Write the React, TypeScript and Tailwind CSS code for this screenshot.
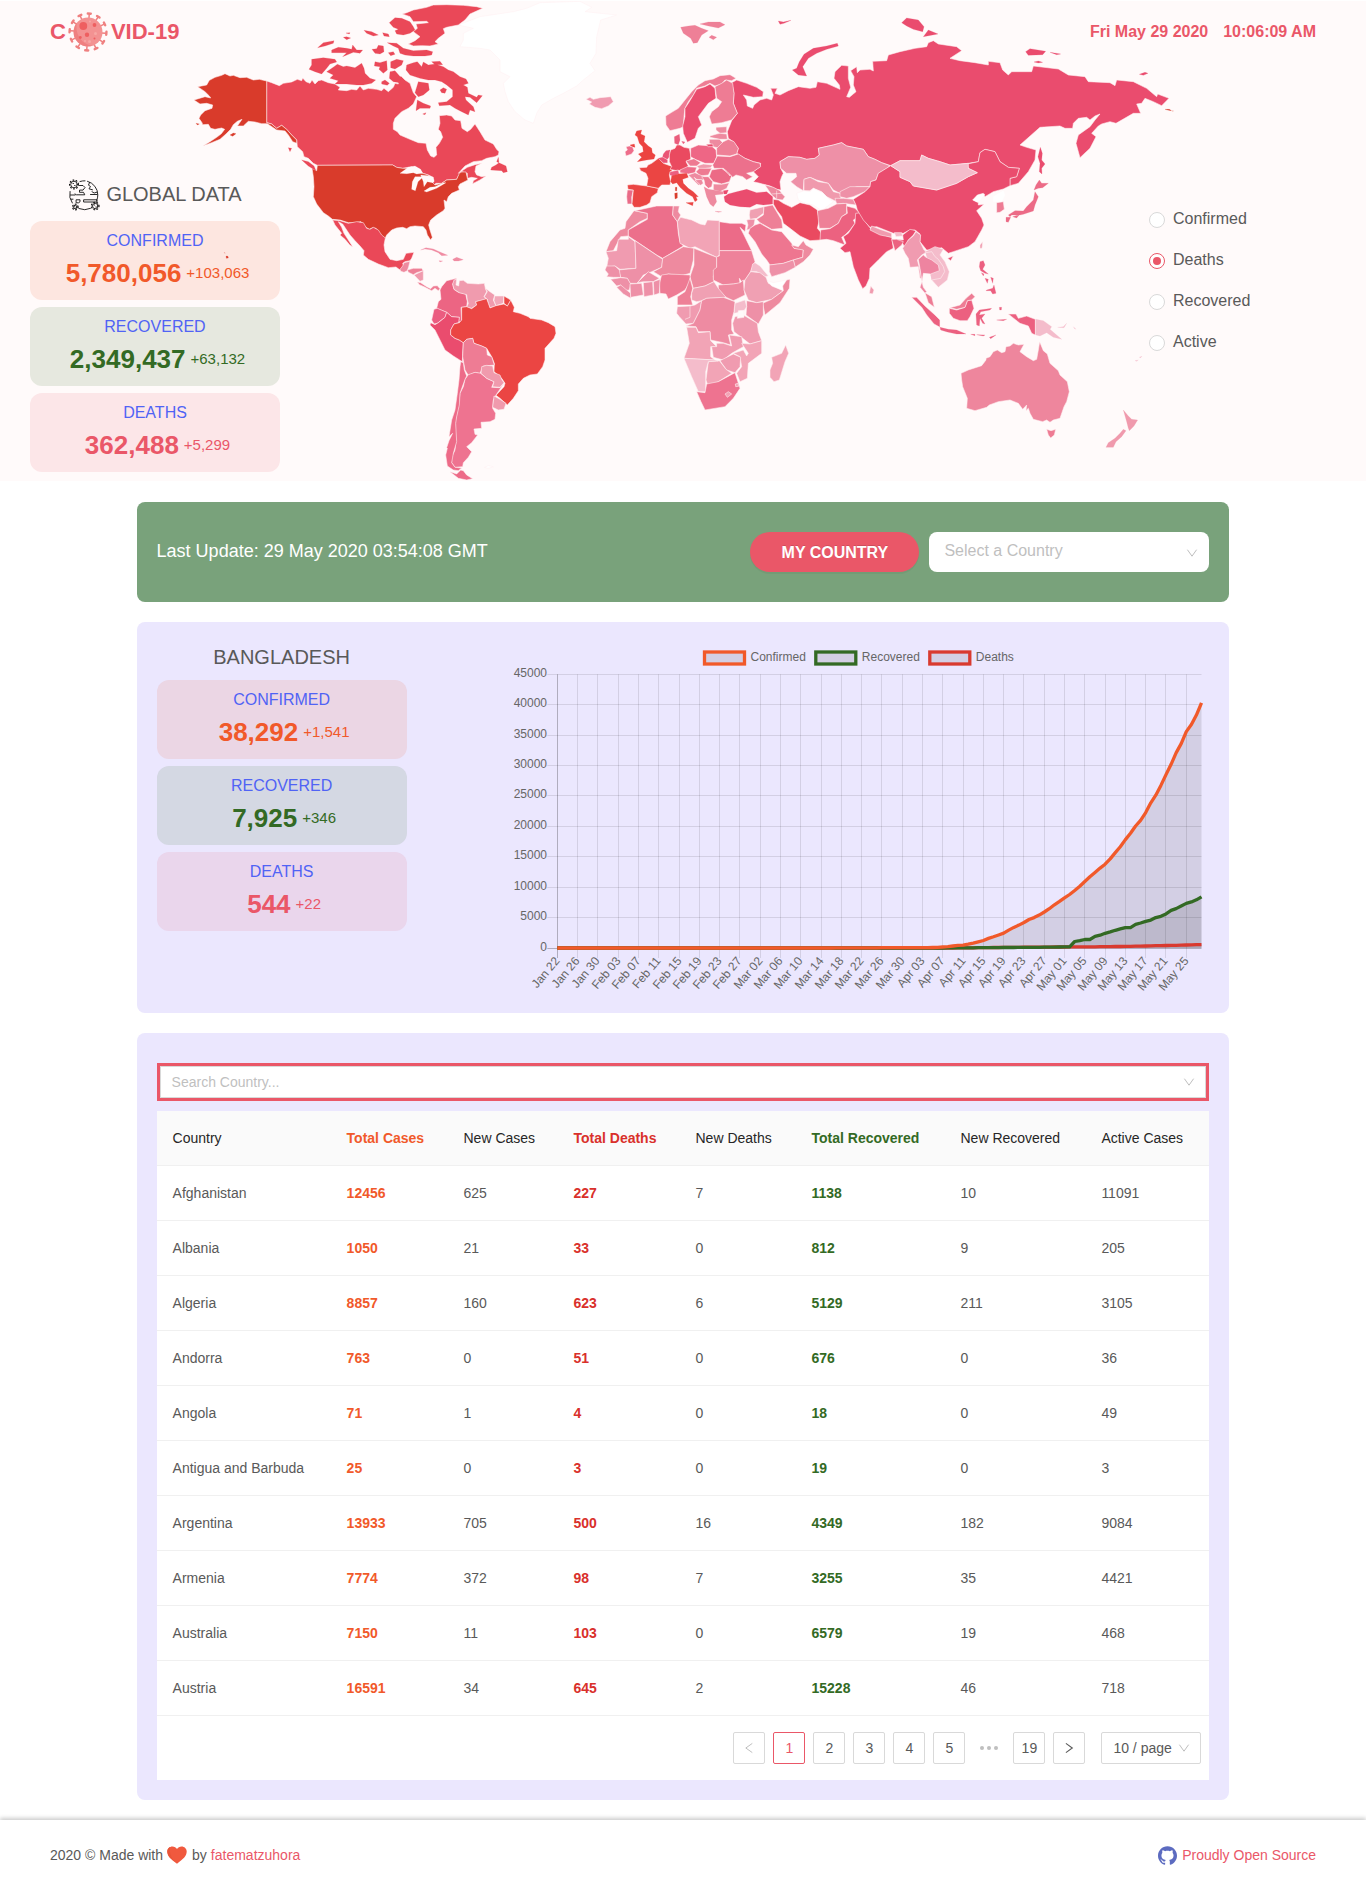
import React from "react";
import { SiGithub } from "react-icons/si";

type Shape = [fill: string, d: string];

const RUS = "#ea4c6e";
const USA = "#d93b2b";
const CAN = "#ea4858";
const HOT = "#eb4543";
const BG = "#fffafa";

const northAmerica: Shape[] = [
  ["#ffffff", "M850 100 880 85 835 75 900 50 1000 35 1040 25 1080 8 1200 4 1235 22 1215 35 1310 45 1262 60 1250 110 1248 160 1230 190 1245 212 1210 240 1190 258 1150 280 1120 295 1085 315 1070 340 1060 370 1035 360 1005 335 985 305 975 275 970 250 990 230 960 215 960 180 930 150 900 145 840 140 850 120Z"],
  [CAN, "M260 243 275 248 298 257 310 250 335 246 352 238 365 242 368 234 378 245 390 250 396 240 405 252 415 242 425 240 445 248 465 252 480 262 475 270 500 272 515 268 530 270 540 258 550 270 565 265 590 268 605 272 612 265 625 275 640 262 645 250 655 252 652 235 663 228 675 240 690 250 700 278 710 290 700 312 685 325 665 335 645 355 640 370 640 388 652 395 660 405 690 418 715 428 738 430 742 450 752 468 762 472 770 465 768 442 778 430 788 412 782 395 775 388 780 370 778 347 800 345 815 348 825 360 842 362 846 385 862 395 872 388 885 372 900 395 910 412 915 420 940 432 950 448 957 455 955 465 945 470 920 475 905 482 880 485 855 498 835 520 862 502 885 494 905 490 888 498 885 515 890 525 905 530 918 528 900 540 878 551 880 542 892 535 875 532 862 535 862 520 845 515 835 528 830 538 800 540 785 550 768 550 755 562 735 572 740 560 750 553 762 545 760 532 745 525 728 520 718 508 695 500 668 505 650 502 638 495 412 496 400 490 385 475 372 470 368 455 352 440 350 420 335 405 320 388 305 376 290 385 275 372 260 368Z"],
  [USA, "M260 243 238 238 220 240 200 232 180 233 160 226 150 228 135 221 125 226 105 232 88 241 80 255 53 260 75 275 88 288 92 294 75 290 42 300 60 312 80 310 98 315 96 325 75 332 62 345 57 355 66 368 68 374 85 373 92 385 105 388 125 384 134 388 124 401 110 412 90 425 70 437 95 428 120 418 138 402 152 388 160 374 172 364 186 358 172 378 190 378 205 364 225 366 245 371 262 371 290 390 315 393 325 405 338 425 350 430 350 420 335 405 320 388 305 376 290 385 275 372 260 368Z"],
  [USA, "M150 405 160 399 168 401 158 409ZM48 370 58 372 52 375Z"],
  [USA, "M412 496 638 495 650 502 668 505 695 505 728 520 745 525 755 545 765 555 785 550 800 540 830 538 838 520 845 516 858 516 862 535 864 540 840 552 835 560 838 570 815 580 805 590 800 605 792 600 795 625 790 632 770 645 752 660 746 675 750 690 757 712 752 720 742 705 738 690 730 680 705 678 690 680 680 686 668 682 650 684 635 690 620 705 615 716 605 710 595 695 588 685 578 683 568 688 555 680 543 665 525 668 505 668 480 660 457 658 445 648 430 638 410 612 400 590 402 560 400 530 396 505 410 512Z"],
  [BG, "M660 520 685 502 705 498 722 508 728 520 710 522 700 518 680 521ZM705 530 730 530 714 545 706 572 695 568 697 545ZM722 525 745 527 762 540 758 548 742 545 732 560 730 545ZM732 573 750 562 765 560 790 548 798 548 770 565 740 576Z"],
  [CAN, "M680 38 700 30 740 22 760 15 800 14 850 16 890 20 908 25 870 42 855 60 835 75 800 82 790 86 795 100 775 115 765 125 775 132 750 138 725 137 700 138 685 132 705 122 720 110 700 95 712 85 708 72 745 68 740 64 700 65 690 50 667 42Z"],
  [CAN, "M628 68 645 53 665 55 690 65 700 80 705 90 690 100 670 105 650 102 645 92 655 88 640 82ZM622 128 650 130 670 145 700 152 740 150 758 155 755 165 735 168 700 168 675 165 660 160 655 145 640 138Z"],
  [CAN, "M395 178 430 173 465 178 470 186 450 192 440 205 425 222 405 215 387 208 395 195ZM440 215 462 200 472 193 490 200 500 198 525 203 545 190 552 205 555 220 570 235 587 240 575 250 550 255 530 255 500 252 465 252 475 242 450 235 460 225Z"],
  [CAN, "M455 150 475 142 500 145 515 148 518 135 530 150 548 150 540 160 520 157 488 170 500 158 455 158ZM413 143 430 128 462 122 460 130 435 138ZM490 112 500 110 512 114 500 119ZM498 99 510 98 508 102ZM552 91 575 95 595 105 580 108 560 100ZM608 98 625 102 628 110 612 108ZM576 148 590 146 595 136 610 138 612 155 600 162 585 160ZM625 158 640 155 645 163 632 167ZM585 185 600 188 620 182 622 210 610 220 597 208 600 200 583 198ZM632 185 650 178 670 182 665 195 645 207 632 203ZM630 215 645 212 662 232 660 248 640 245 628 235ZM605 245 615 240 628 250 622 256 605 252Z"],
  [CAN, "M680 195 700 188 712 185 725 200 730 186 745 195 765 192 790 200 805 210 820 215 840 230 858 237 865 250 850 255 862 262 865 280 890 292 895 285 907 287 890 308 870 292 855 290 858 300 880 320 885 335 870 330 865 345 845 335 825 325 810 315 778 317 775 308 800 305 818 290 818 270 800 255 785 245 765 240 745 240 720 235 690 225 678 210ZM755 185 780 184 788 194 765 194ZM712 300 730 310 752 318 750 325 735 325 720 325 708 332ZM715 245 745 250 748 270 730 285 715 290 705 278ZM780 270 790 263 800 268 795 280 785 278ZM728 342 738 338 735 344Z"],
  [CAN, "M365 480 385 485 402 498 408 512 385 498ZM325 443 335 445 330 455ZM935 502 948 495 957 488 955 472 950 485 965 492 978 498 982 515 970 518 965 512 932 510Z"],
  [USA, "M138 768 144 769 145 774 139 775ZM133 758 135 758 135 760Z"],
];

const southAmerica: Shape[] = [
  [CAN, "M98 0 120 2 145 10 170 5 190 8 200 25 210 28 220 22 235 30 245 45 256 54 252 75 255 95 270 118 290 122 310 118 318 100 342 97 335 115 330 122 315 125 308 130 312 138 300 150 288 141 265 143 235 132 205 118 190 105 192 92 180 78 165 62 150 45 140 30 128 12 115 5 125 22 132 40 145 60 158 80 150 76 135 58 120 45 125 40 105 15Z"],
  ["#ee8a9f", "M300 148 308 138 312 128 330 124 326 140 322 152 312 157 302 154Z"],
  ["#ee8097", "M322 150 340 145 365 145 370 152 350 158 340 164 325 157Z"],
  ["#f09bae", "M342 165 370 152 370 180 360 184Z"],
  ["#ee7c94", "M352 186 362 188 380 200 392 206 400 198 412 197 420 206 415 212 405 205 395 212 385 207 372 200 358 194Z"],
  ["#f08ca2", "M362 90 378 83 400 87 420 96 443 106 425 107 415 98 395 90 375 87ZM458 118 470 112 490 119 475 123 462 123ZM417 122 428 123 420 126Z"],
  ["#ec6583", "M458 178 470 175 458 192 462 208 475 217 497 222 502 245 500 260 483 262 485 305 475 305 478 292 455 290 440 277 410 265 415 245 423 238 420 210 425 200 440 182Z"],
  ["#f09bae", "M458 192 462 180 470 178 468 195 476 198 478 182 490 181 502 190 535 192 553 190 556 205 560 215 552 230 560 238 527 245 530 255 515 265 500 262 505 250 502 240 500 224 478 218 462 208Z"],
  ["#f09bae", "M556 205 570 215 584 225 580 240 588 258 570 263 565 250 562 238 553 230 562 215Z"],
  ["#f2a8b9", "M584 228 612 228 610 250 588 257 582 242Z"],
  ["#eb5c80", "M402 268 412 265 440 277 435 292 412 310 402 312 395 300Z"],
  [RUS, "M440 277 455 290 478 292 476 308 462 312 452 330 452 345 465 355 478 360 490 368 488 400 487 425 460 408 435 390 420 360 405 330 390 315 392 308 405 314 415 308 435 292Z"],
  [HOT, "M485 262 500 260 515 266 530 255 527 245 560 236 565 250 570 264 588 257 612 252 622 258 632 240 643 262 640 275 660 280 685 290 690 295 725 300 745 308 765 320 768 340 762 355 735 385 735 420 728 440 712 462 690 465 670 475 655 492 655 512 640 535 622 555 600 535 588 526 612 500 615 490 605 475 582 455 583 430 575 410 560 385 545 378 522 370 518 355 500 358 490 368 478 360 465 355 452 345 452 330 462 312 478 308 485 300Z"],
  [HOT, "M612 228 632 240 622 258 612 250Z"],
  ["#ee7c94", "M490 368 500 358 518 355 522 370 545 378 560 385 562 405 575 410 583 435 575 436 550 438 540 460 525 457 505 466 495 450 488 410Z"],
  ["#ee7390", "M505 464 525 457 542 460 560 475 582 485 575 502 600 503 612 490 588 525 580 540 578 565 587 580 585 598 570 605 543 607 545 625 522 627 525 643 533 645 515 668 500 680 515 695 505 712 490 728 488 740 465 742 455 728 455 712 465 690 468 660 465 610 475 560 480 520 490 500 495 478Z"],
  ["#f09aad", "M545 440 560 436 578 438 582 458 600 465 605 478 612 488 600 502 578 500 582 485 560 475 543 460Z"],
  ["#f09aad", "M582 528 600 538 618 550 612 568 595 570 578 562Z"],
  ["#ed6b88", "M482 425 490 428 493 450 500 468 495 478 480 520 478 555 470 590 467 610 470 665 460 700 455 728 465 742 485 744 475 752 460 750 442 738 437 705 442 685 440 683 447 662 458 640 447 650 455 600 465 570 472 520 477 480 480 440Z"],
  ["#ed6b88", "M450 755 470 762 482 750 490 752 500 765 518 776 500 780 475 775Z"],
  ["#ffffff", "M553 742 565 737 580 740 565 745Z"],
];

const eurasia: Shape[] = [
  ["#f09bb0", "M18 298 30 292 40 298 60 293 92 290 100 305 85 318 65 326 45 322 28 312 35 306Z"],
  ["#ee8097", "M302 82 325 78 345 76 365 85 385 92 365 105 352 128 340 130 332 115 310 100ZM360 72 385 66 420 66 435 74 415 84 385 78ZM387 112 395 106 410 112 400 119Z"],
  [RUS, "M595 63 610 66 633 61 612 70 600 73ZM637 210 650 205 658 185 672 163 700 145 740 138 772 130 775 138 740 148 710 160 685 175 668 200 680 228 655 225Z"],
  [RUS, "M455 248 470 240 500 250 530 262 550 275 548 290 520 292 490 285 500 300 502 318 518 325 522 315 540 300 560 295 575 300 580 285 572 265 592 265 585 280 600 285 625 272 655 260 690 265 708 262 712 245 740 250 780 268 778 255 762 235 765 215 785 196 805 198 805 235 812 262 800 290 808 292 828 275 820 255 822 230 812 212 830 200 832 218 840 210 870 208 880 213 878 184 920 182 925 165 960 155 1005 145 1040 140 1045 128 1060 122 1075 132 1130 140 1145 152 1110 175 1140 182 1185 188 1225 195 1225 184 1260 188 1268 210 1285 225 1295 215 1355 215 1360 198 1435 207 1465 225 1515 230 1525 245 1590 248 1605 257 1610 240 1660 245 1700 265 1730 290 1733 282 1767 295 1745 317 1720 305 1695 295 1685 310 1670 312 1682 340 1660 340 1608 370 1590 365 1565 372 1555 378 1535 400 1548 410 1530 445 1500 473 1488 430 1495 405 1530 380 1545 360 1560 342 1545 348 1530 360 1520 352 1495 355 1480 370 1478 385 1455 385 1440 378 1380 382 1320 435 1340 442 1368 450 1365 480 1345 515 1315 550 1290 557 1290 535 1310 530 1318 505 1285 502 1260 485 1245 455 1215 448 1200 458 1195 485 1165 490 1110 495 1080 485 1045 475 1025 465 1020 482 960 482 932 497 905 488 885 478 865 470 850 448 835 445 800 438 785 428 760 435 715 445 718 465 705 475 680 478 660 472 625 470 600 485 602 505 610 520 605 530 600 545 603 570 590 568 570 558 540 550 520 545 535 530 520 515 540 500 542 490 520 485 495 475 470 460 475 445 460 425 445 415 442 395 450 375 455 362 472 340 460 310 462 280Z"],
  ["#ee7c94", "M257 348 275 337 295 325 315 300 335 275 355 255 375 242 400 237 420 227 450 224 468 235 455 242 435 240 425 252 405 258 390 250 375 258 350 265 340 285 325 305 315 325 312 350 310 380 300 385 270 392 258 375Z"],
  [RUS, "M375 260 390 252 405 265 408 295 385 310 370 330 355 350 365 375 355 385 345 415 322 427 310 400 308 378 315 350 315 325 328 305 340 285 350 268Z"],
  ["#ee7c94", "M405 260 425 250 440 240 458 250 462 280 460 310 472 340 455 360 425 368 395 372 388 350 395 335 415 320 425 305 410 295Z"],
  ["#ec4340", "M170 393 185 390 182 402 195 408 192 425 205 438 215 445 217 458 226 465 222 477 200 480 172 485 185 472 175 462 190 455 188 440 178 430 172 410 165 405ZM150 435 163 432 165 442 155 440Z"],
  ["#ee6d8a", "M138 440 148 438 158 441 162 452 155 462 138 468 135 455 142 450Z"],
  ["#ea6a87", "M142 570 160 570 155 592 156 612 142 612 140 590Z"],
  [HOT, "M142 555 160 553 200 558 235 565 232 578 215 590 210 608 200 615 180 622 162 622 156 612 158 590 160 570 144 568Z"],
  [HOT, "M178 503 200 502 204 495 215 490 235 475 250 490 278 500 275 515 268 525 272 545 270 555 245 555 235 565 200 558 204 535 198 520 182 512Z"],
  ["#d93b2b", "M286 562 291 562 290 573 286 572ZM284 580 292 578 292 594 285 597Z"],
  ["#ea5575", "M250 462 258 452 270 450 268 470 262 478 248 470ZM235 475 248 472 262 480 262 488 250 488Z"],
  ["#ea4a60", "M272 450 285 445 290 435 300 435 312 442 328 445 332 465 332 478 318 485 325 498 315 510 290 512 270 508 275 500 268 485 268 465Z"],
  ["#ea5c7c", "M283 410 298 403 300 420 295 434 284 430ZM305 424 315 426 310 432Z"],
  ["#ee6685", "M332 445 355 435 395 438 408 450 410 470 402 490 375 490 345 478 332 470Z"],
  ["#ee7a92", "M318 483 342 476 362 488 350 498 330 498Z"],
  ["#ee6d8a", "M300 510 322 500 350 502 345 518 325 522 300 518Z"],
  ["#ec6080", "M270 515 295 510 298 522 280 530 268 525Z"],
  ["#f09bad", "M350 498 370 492 398 495 392 503 360 508Z"],
  ["#ee7a92", "M348 515 358 505 395 505 385 525 360 528Z"],
  ["#ee8aa0", "M325 525 345 518 372 530 370 540 350 538 342 532 362 555 355 555 335 535Z"],
  ["#ee8aa0", "M345 540 365 538 370 550 362 556Z"],
  ["#ee7a92", "M365 530 385 530 398 545 395 560 385 565 375 555 372 540Z"],
  ["#ec6a86", "M395 510 425 505 445 520 455 528 448 545 425 552 400 545 388 530Z"],
  ["#ee8a9f", "M400 552 425 553 448 548 440 565 420 575 400 570Z"],
  ["#ee8a9f", "M372 560 385 568 400 570 430 575 430 582 405 585 410 605 400 620 390 612 380 590ZM405 634 425 635 415 637Z"],
  ["#ee8a9f", "M430 505 445 510 450 528Z"],
  [HOT, "M272 545 275 528 295 522 320 520 325 532 308 538 310 550 325 565 340 575 355 590 348 590 352 600 345 605 338 590 320 580 300 562 290 548 278 552ZM318 608 340 607 338 617Z"],
  ["#ee8aa0", "M408 382 440 380 440 398 420 400 408 390Z"],
  ["#ee8aa0", "M390 408 410 402 420 400 440 402 442 418 420 418 390 412Z"],
  ["#ee8aa0", "M388 418 418 418 430 430 418 445 400 440 388 428Z"],
  [RUS, "M378 433 398 432 400 440 385 440Z"],
  ["#ee8097", "M410 445 430 425 445 418 462 425 475 445 470 462 450 468 410 465Z"],
  ["#ec708c", "M402 488 412 468 450 470 475 462 495 475 520 485 540 490 542 500 520 515 500 520 518 530 500 540 488 530 468 525 458 532 442 515 430 505 402 505 398 495Z"],
  [RUS, "M432 590 445 582 470 575 500 568 530 578 560 575 578 590 578 612 550 615 530 612 510 622 480 620 450 615 435 605ZM430 572 445 570 440 582 432 582Z"],
  ["#ee8a9f", "M555 555 580 562 600 572 605 580 615 590 608 600 590 598 575 585 565 570Z"],
  ["#ee8a9f", "M575 582 605 580 M590 572 590 598"],
  ["#ee90a7", "M600 485 625 470 660 472 680 478 705 475 718 465 715 445 760 435 785 428 800 438 835 445 850 448 865 470 885 478 905 488 930 497 920 505 895 520 888 540 872 545 870 560 830 560 800 572 780 580 760 570 745 550 710 540 690 532 672 538 670 572 650 560 632 545 650 530 648 520 620 520 602 505Z"],
  ["#f09aad", "M672 538 690 532 715 545 745 550 760 575 780 580 785 590 770 605 740 590 725 575 700 565 690 572 672 572Z"],
  ["#ffffff", "M650 580 672 572 690 575 700 565 728 578 745 595 760 605 725 632 700 615 670 608 655 600Z"],
  ["#ee90a7", "M780 575 810 560 870 560 855 575 820 590 800 595 780 590Z"],
  ["#ee90a7", "M765 595 790 595 820 598 828 615 790 610 770 612Z"],
  ["#ea4a60", "M580 598 595 600 610 610 635 622 660 608 690 615 712 630 718 660 712 685 725 700 722 720 690 722 660 708 630 685 610 670 605 650 590 630 580 612Z"],
  ["#ee8097", "M712 632 745 625 770 612 800 610 800 640 785 650 775 670 750 685 718 685Z"],
  ["#ec6280", "M722 690 750 686 775 670 785 650 802 640 800 618 825 625 845 645 820 660 825 670 810 690 795 705 785 712 795 735 760 722 740 718 720 720Z"],
];

const africa: Shape[] = [
  ["#f0a0b2", "M480 90 522 80 520 100 500 115 480 118 478 105Z"],
  ["#ee8097", "M522 80 548 75 560 95 575 120 578 145 545 148 510 128 500 118 520 105Z"],
  ["#ee90a7", "M470 120 482 118 495 118 492 135 478 148 470 150 474 135Z"],
  ["#ee7690", "M480 145 495 135 510 130 545 150 575 155 588 170 605 190 612 205 640 208 638 232 610 240 580 250 540 255 530 240 515 222 495 185 475 160Z"],
  ["#ee8a9f", "M605 195 625 200 640 182 648 195 670 208 660 225 640 245 615 262 610 240 638 232 640 210 612 205Z"],
  ["#ee90a7", "M538 255 580 250 610 240 616 262 585 278 545 290 538 275Z"],
  ["#ee8a9f", "M132 92 172 100 172 115 150 125 115 150 115 168 92 170 70 212 48 215 60 185 90 150 105 145 108 125Z"],
  ["#f09bb0", "M48 215 80 212 85 178 115 178 115 170 135 185 138 265 90 268 75 258 50 262 55 235Z"],
  ["#ec6f8b", "M135 92 200 78 250 78 248 105 262 125 265 160 270 185 280 198 218 235 200 225 115 168 115 150 172 118 172 100Z"],
  ["#ee8aa0", "M250 78 268 78 265 95 272 105 262 125 248 105Z"],
  ["#f2a4b6", "M272 112 305 120 330 132 345 135 352 120 388 122 388 225 380 232 315 200 300 205 270 190 265 150 262 125Z"],
  ["#ec6b88", "M388 125 420 130 455 130 468 135 465 155 450 142 462 165 485 212 388 212Z"],
  ["#ee90a7", "M135 182 218 238 215 262 185 275 160 285 142 310 120 310 112 295 92 292 85 270 138 265Z"],
  ["#ee8a9f", "M218 235 280 200 312 205 310 240 300 280 270 288 235 282 215 290 190 275 215 262Z"],
  ["#ee8a9f", "M312 205 380 232 380 262 370 290 372 305 345 318 310 325 300 290 312 255Z"],
  ["#ee829a", "M388 212 485 212 495 245 482 275 465 300 455 305 448 295 450 310 430 312 400 315 370 300 370 270 380 262 380 230 388 228Z"],
  ["#ee8aa0", "M385 315 430 312 450 308 460 300 462 325 465 345 430 362 405 350 385 330Z"],
  ["#f4bccb", "M482 275 488 252 495 248 510 258 535 288 525 290 500 275Z"],
  ["#f0a0b3", "M465 300 482 275 510 278 528 292 535 310 580 332 545 358 500 368 475 360 462 330Z"],
  ["#ffffff", "M532 302 550 308 600 298 580 332 545 318Z"],
  ["#ee8a9f", "M590 300 600 298 598 325 570 368 525 405 518 370 545 358 580 332 578 318Z"],
  ["#ee90a7", "M470 362 500 368 520 365 520 405 505 432 468 405 470 380Z"],
  ["#f4bccb", "M435 370 465 360 470 380 460 395 432 400Z"],
  ["#f09bb0", "M435 410 460 405 502 430 505 455 515 482 480 492 462 478 432 455 428 430Z"],
  ["#fffafa", "M445 392 462 391 462 412 442 415Z"],
  ["#ee7b94", "M215 285 235 282 300 285 300 305 285 330 260 345 235 357 228 342 210 340 208 310Z"],
  ["#ee8097", "M300 295 308 325 302 350 308 375 262 375 262 350 285 335Z"],
  ["#f0a0b3", "M310 325 345 318 372 305 385 325 408 352 350 355 335 362 320 365 305 360 305 340Z"],
  ["#f09bb0", "M262 380 300 378 315 375 335 362 330 390 310 430 288 432 268 410 260 400Z"],
  ["#f09bb0", "M300 378 300 412 285 418"],
  ["#ee8ba2", "M335 362 350 355 400 352 435 365 432 395 425 420 425 450 432 462 415 465 422 495 400 488 362 480 360 455 325 455 318 440 288 438 310 430 330 390Z"],
  ["#f2a4b6", "M290 442 318 442 325 458 360 455 362 482 380 500 362 500 362 530 375 540 282 535 298 490Z"],
  ["#f09bb0", "M380 490 400 490 425 498 418 465 455 470 460 500 425 520 400 540 370 532 365 500 380 500Z"],
  ["#f2a4b6", "M455 490 480 492 515 482 515 520 475 550 472 595 450 605 440 580 455 560 450 530 430 520 460 510 470 528 475 520Z"],
  ["#f09bb0", "M390 542 430 522 452 532 450 560 435 578 410 570Z"],
  ["#f2a4b6", "M355 545 388 542 408 568 425 580 385 605 355 620 348 600Z"],
  ["#f4bccb", "M282 535 375 540 385 543 355 545 347 575 347 635 325 635 305 590Z"],
  ["#ee7390", "M320 635 345 638 350 612 385 605 435 578 442 600 450 625 430 655 405 680 345 690 333 665Z"],
  ["#f2a4b6", "M405 642 415 635 425 642 412 652Z"],
  ["#f2a4b6", "M436 612 444 610 446 619 437 620Z"],
  ["#f2a4b6", "M587 495 596 520 585 545 568 600 552 605 540 592 540 570 548 550 545 532 575 520Z"],
  ["#ee90a7", "M45 270 50 258 75 258 88 270 92 292 70 292 50 290 55 282Z"],
  ["#ee90a7", "M62 298 92 293 112 295 122 312 118 330 100 332 92 315 80 318Z"],
  ["#ee90a7", "M80 322 92 315 122 340 122 355 100 342Z"],
  ["#ee90a7", "M120 312 155 310 160 345 122 352Z"],
  ["#ee90a7", "M142 308 175 275 208 295 190 305 160 305Z"],
  ["#ee90a7", "M160 308 188 305 190 345 162 350Z"],
  ["#ee90a7", "M190 305 210 298 208 340 192 345Z"],
  [RUS, "M797 100 815 98 830 130 845 150 875 163 905 172 910 205 890 215 865 240 840 265 838 295 828 318 818 326 805 300 790 260 780 215 765 218 750 205 768 190 760 170 775 160 795 130Z"],
  ["#f09bae", "M842 318 852 330 848 342 838 340Z"],
];

const eastAsia: Shape[] = [
  [RUS, "M92 437 120 455 120 472 150 485 160 498 230 510 290 490 325 470 352 458 325 445 322 432 355 425 360 398 375 388 405 395 420 425 445 442 478 445 470 470 450 475 450 497 430 507 400 515 375 530 370 520 352 525 338 540 355 548 355 555 372 553 350 572 365 595 372 615 365 630 345 665 325 680 280 695 265 700 245 683 215 690 200 690 180 665 180 642 165 630 145 632 130 640 100 640 50 620 30 622 10 600 -8 570 -12 555 -20 538 15 515 30 500 32 485 48 480 55 460Z"],
  ["#f4bccb", "M92 437 120 422 180 422 185 405 205 415 240 425 270 435 325 430 325 445 352 458 325 470 290 490 230 510 160 498 150 485 120 472 120 455Z"],
  ["#ffffff", "M400 530 430 512 435 525 425 545 400 545ZM340 540 355 525 375 522 360 540 350 545Z"],
  ["#ee7c94", "M410 548 430 545 433 568 420 577 410 578Z"],
  ["#ec6a86", "M522 510 528 495 538 480 545 490 565 490 548 503 535 505ZM525 515 535 530 525 555 520 573 490 583 480 585 455 585 450 590 445 585 465 572 490 573 500 560 520 540ZM438 592 452 592 445 607 438 605ZM458 590 478 584 470 594Z"],
  [RUS, "M125 8 140 -6 175 0 192 20 188 35 160 28 140 18ZM190 50 205 30 234 42ZM497 95 510 86 557 94 548 104 505 106ZM570 97 602 102 590 104ZM522 126 535 123 548 127 535 129ZM838 163 855 157 864 160 850 166ZM541 382 547 400 545 420 555 432 545 445 546 462 538 455 540 430 534 410Z"],
  [USA, "M915 268 928 268 935 272 922 270ZM938 272 940 273 938 274Z"],
];

const oceania: Shape[] = [
  ["#f09bae", "M35 78 60 88 95 100 95 112 60 105 30 90Z"],
  ["#f4b8c7", "M103 98 125 98 128 108 108 110Z"],
  [RUS, "M105 118 130 120 128 105 150 88 168 92 160 105 145 120 135 145 128 130 110 125Z"],
  ["#ec6280", "M95 118 110 118 130 125 125 135 105 152Z"],
  ["#f09bb0", "M128 145 145 120 160 108 168 95 182 105 180 125 192 150 202 155 185 165 172 180 180 210 185 235 180 235 175 200 150 202 145 175 135 160Z"],
  ["#f4bccb", "M195 155 225 140 250 148 240 165 255 185 268 215 262 240 235 262 215 240 212 225 238 215 235 195 215 180 200 170Z"],
  ["#f4bccb", "M198 158 215 155 225 170 235 178 250 200 254 215 242 235 215 240"],
  ["#ee84a0", "M175 178 190 165 198 172 215 180 235 195 238 212 212 222 190 220 186 245 190 262 200 275 195 280 180 262 186 245 180 205Z"],
  ["#ee7c94", "M195 278 215 290 223 322 205 308Z"],
  ["#ec6080", "M155 292 170 292 195 318 225 345 240 360 240 382 222 372 200 345 185 322Z"],
  ["#ec6080", "M268 325 290 330 315 322 322 302 335 300 342 325 330 350 322 362 300 362 280 355 268 340Z"],
  ["#ee7c94", "M270 323 300 315 318 295 335 280 345 290 335 300 322 302 315 322 290 328Z"],
  ["#ec6080", "M240 382 265 388 290 390 318 402 290 402 262 396 242 390ZM348 342 358 330 395 325 390 330 362 335 358 345 375 342 365 355 375 372 368 370 360 355 358 378 350 375ZM332 403 345 403 345 407ZM350 404 375 405 370 408ZM388 412 408 405 392 416ZM410 360 440 358 430 362ZM418 322 425 322 424 330 419 330Z"],
  ["#ec6080", "M445 342 468 342 475 355 500 348 526 358 526 405 515 400 505 378 480 370 455 350Z"],
  ["#f4bccb", "M528 358 550 362 575 380 570 388 590 405 605 418 580 412 560 398 540 408 528 405ZM593 382 610 380 620 370 612 383ZM640 380 648 388 644 386Z"],
  ["#ec5f80", "M360 185 370 182 375 195 368 208 385 222 375 220 362 212 358 200ZM380 270 398 265 402 255 408 280 398 282 392 272 378 272ZM375 235 385 238 382 250ZM392 232 400 235 398 250ZM364 218 372 222 370 228Z"],
  [RUS, "M263 175 280 168 272 182Z"],
  ["#f09bae", "M360 135 368 125 366 145 360 145Z"],
  ["#ee869d", "M303 520 325 510 365 497 378 480 378 475 390 470 400 455 412 450 425 458 435 455 438 440 450 438 460 430 475 435 492 433 480 455 500 470 520 482 530 478 535 450 539 425 550 452 562 462 570 490 595 512 600 525 622 545 628 575 620 605 612 620 600 655 580 660 570 667 560 660 548 665 520 658 510 640 505 625 498 632 500 615 488 628 475 610 450 600 415 605 388 615 380 622 345 632 320 625 322 595 308 560 305 540Z"],
  ["#ee7c94", "M560 688 573 692 587 688 583 705 572 714 565 705Z"],
  ["#f09aad", "M790 630 805 648 815 658 833 660 822 678 808 692 805 685 800 665ZM790 688 798 692 785 710 768 725 760 742 738 742 745 728 765 715 780 700Z"],
  ["#f4bccb", "M825 482 835 480 830 484ZM838 472 846 469 842 473Z"],
];

const regions: { at: string; shapes: Shape[] }[] = [
  { at: "translate(180 0) scale(.33333)", shapes: northAmerica },
  { at: "translate(300 220) scale(.33333)", shapes: southAmerica },
  { at: "translate(580 0) scale(.33333)", shapes: eurasia },
  { at: "translate(590 180) scale(.33333)", shapes: africa },
  { at: "translate(860 20) scale(.33333)", shapes: eastAsia },
  { at: "translate(860 200) scale(.33333)", shapes: oceania },
];

// Island groups (several closed rings) keep their full size; single landmasses get a border line.
function WorldMap() {
  return (
    <svg viewBox="0 1 1366 480" className="pointer-events-none absolute inset-0 h-[480px] w-[1366px]">
      {regions.map((r) => (
        <g key={r.at} transform={r.at} stroke="#fff0f3" strokeWidth="1.7" strokeLinejoin="round">
          {r.shapes.map(([fill, d], i) => (
            <path key={i} d={d} fill={fill} stroke={d.includes("ZM") ? fill : undefined} strokeWidth={d.includes("ZM") ? 0.6 : undefined} />
          ))}
        </g>
      ))}
    </svg>
  );
}

function VirusLogo() {
  const spikes = Array.from({ length: 12 }, (_, i) => i * 30 + 4);
  return (
    <svg viewBox="0 0 40 40" className="h-10 w-10">
      {spikes.map((a) => (
        <g key={a} transform={`rotate(${a} 20 20)`} stroke="#ef8080" strokeLinecap="round">
          <path d="M20 7V2" strokeWidth="1.500" />
          <path d="M18.500 1.600h3" strokeWidth="2.400" />
        </g>
      ))}
      <circle cx="20" cy="20" r="14.500" fill="#f39292" />
      <path d="M9 10.500a14.500 14.500 0 0 0 15 23.300a19 19 0 0 1-15-23.300z" fill="#ef8080" />
      <circle cx="15.300" cy="14" r="3.900" fill="#ee5f60" />
      <circle cx="26.500" cy="13" r="1.900" fill="#ee5f60" />
      <circle cx="19" cy="22.800" r="2.200" fill="#ee5f60" />
      <circle cx="12.300" cy="25.500" r="1.400" fill="#ee5f60" />
      <circle cx="26.500" cy="26.500" r="1" fill="#ee5f60" />
      <g fill="#f7a8a4">
        <circle cx="27.500" cy="21.500" r="1.500" />
        <circle cx="21.500" cy="29.500" r="1.500" />
        <circle cx="22" cy="9.500" r="1" />
        <circle cx="17" cy="29" r="1" />
      </g>
    </svg>
  );
}

function MiniVirus({ x, y, r }: { x: number; y: number; r: number }) {
  return (
    <g>
      <circle cx={x} cy={y} r={r} />
      <circle cx={x} cy={y} r={r + 1.1} strokeWidth="1.200" strokeDasharray=".8 2.400" />
      <path d={`M${x - 1} ${y - 1}h.5M${x + 0.6} ${y + 1}h.5`} />
    </g>
  );
}

function GlobeIcon() {
  return (
    <svg viewBox="0 0 32 32" className="h-8 w-8" fill="none" stroke="#111" strokeWidth=".9" strokeLinecap="round" strokeLinejoin="round">
      <path d="M12 2.500a14 14 0 0 1 5-.7M19.500 2.300a14 14 0 0 1 10.300 13.700c0 2-.4 3.700-1.100 5.500M2 12.500a14 14 0 0 0 2.300 11.500M11 29.600a14 14 0 0 0 11.500-.2" />
      <path d="M11.500 6.500h3.500l2 2-2 2.600h-3.500v2.200h4l1.300 2.500H8.500L7 15M2.500 16h4.500M21.500 3.500l-1 2.700 2 1.300-1.500 2.300 3.500 1M22.500 15.500h6.500M24 12.700l2.200 1.300 2.600-.8" />
      <path d="M16 20.800h13v2.200H16zM8.500 20.800h3.500v2l-1.500 1H8.500zM3 20.200h2" />
      <MiniVirus x={6} y={5.500} r={3.300} />
      <MiniVirus x={27.200} y={27} r={2.700} />
      <MiniVirus x={7.300} y={28} r={1.700} />
    </svg>
  );
}

function Chevron({ className = "" }: { className?: string }) {
  return (
    <svg viewBox="0 0 12 12" className={`h-3 w-3 ${className}`} fill="none" stroke="#bfbfbf" strokeWidth="1">
      <path d="M1.400 2.700 6 9.200 10.600 2.700" />
    </svg>
  );
}

const tones = {
  confirmed: { label: "CONFIRMED", bg: "bg-[rgba(241,89,42,0.12)]", text: "text-[#f1592a]" },
  recovered: { label: "RECOVERED", bg: "bg-[rgba(51,105,35,0.12)]", text: "text-[#336a24]" },
  deaths: { label: "DEATHS", bg: "bg-[rgba(234,87,104,0.12)]", text: "text-[#ea5768]" },
};

function StatCard({ tone, total, delta }: { tone: keyof typeof tones; total: string; delta: string }) {
  const t = tones[tone];
  return (
    <div className={`flex h-[79px] w-[250px] flex-col items-center rounded-xl pt-2 ${t.bg}`}>
      <div className="text-base leading-6 text-[#5063f5]">{t.label}</div>
      <div className={`flex h-10 items-center ${t.text}`}>
        <span className="mx-[5px] text-[26px] leading-10 font-bold">{total}</span>
        <span className="text-[15px]">{delta}</span>
      </div>
    </div>
  );
}

function Radio({ label, checked }: { label: string; checked?: boolean }) {
  return (
    <label className="flex h-[41px] items-center gap-2 text-base">
      <span
        className={`mt-[2px] flex h-4 w-4 items-center justify-center rounded-full border bg-white ${checked ? "border-[#ea5768]" : "border-[#d9d9d9]"}`}
      >
        {checked && <span className="h-2 w-2 rounded-full bg-[#ea5768]" />}
      </span>
      <span>{label}</span>
    </label>
  );
}

const dayCount = 128;
const pad = (tail: number[]) => [...Array(dayCount - tail.length).fill(0), ...tail];

const confirmed = pad([
  3, 3, 3, 3, 3, 3, 3, 5, 8, 10, 14, 17, 20, 25, 27, 33, 39, 39, 44, 48, 48, 48, 49, 51, 54, 56, 61, 70, 88, 123, 164, 218,
  330, 424, 482, 621, 803, 1012, 1231, 1572, 1838, 2144, 2456, 2948, 3382, 3772, 4186, 4689, 4998, 5416, 5913, 6462, 7103,
  7667, 8238, 8790, 9455, 10143, 10929, 11719, 12425, 13134, 13770, 14657, 15691, 16660, 17822, 18863, 20065, 20995, 22268,
  23870, 25121, 26738, 28511, 30205, 32078, 33610, 35585, 36751, 38292, 40321,
]);
const recovered = pad([
  26, 30, 33, 33, 36, 39, 42, 42, 49, 58, 66, 75, 85, 87, 92, 108, 112, 113, 122, 131, 139, 150, 160, 174, 177, 1063, 1210,
  1403, 1403, 1910, 2101, 2414, 2650, 2902, 3147, 3361, 3361, 3882, 4117, 4373, 4585, 4993, 5207, 5602, 6190, 6486, 6901,
  7334, 7579, 7925, 8425,
]);
const deaths = pad([
  27, 30, 34, 39, 46, 50, 60, 75, 84, 91, 101, 110, 120, 127, 131, 140, 145, 152, 155, 163, 168, 170, 175, 177, 182, 183,
  186, 199, 206, 214, 228, 239, 250, 269, 283, 298, 314, 328, 349, 370, 386, 408, 432, 452, 480, 501, 522, 544, 559,
]);

const tickLabels = [
  "Jan 22", "Jan 26", "Jan 30", "Feb 03", "Feb 07", "Feb 11", "Feb 15", "Feb 19", "Feb 23", "Feb 27", "Mar 02",
  "Mar 06", "Mar 10", "Mar 14", "Mar 18", "Mar 22", "Mar 26", "Mar 30", "Apr 03", "Apr 07", "Apr 11", "Apr 15",
  "Apr 19", "Apr 23", "Apr 27", "May 01", "May 05", "May 09", "May 13", "May 17", "May 21", "May 25",
];

const L = 557.3;
const R = 1201.5;
const T = 674.3;
const B = 948;
const px = (i: number) => L + ((R - L) * i) / (dayCount - 1);
const py = (v: number) => B - ((B - T) * v) / 45000;

function Area({ data }: { data: number[] }) {
  const line = data.map((v, i) => `${px(i).toFixed(1)} ${py(v).toFixed(1)}`).join(" ");
  return <path d={`M${L} ${B}L${line} ${R} ${B}Z`} fill="rgba(0,0,0,0.1)" />;
}

function Line({ data, color }: { data: number[]; color: string }) {
  const line = data.map((v, i) => `${px(i).toFixed(1)} ${py(v).toFixed(1)}`).join(" ");
  return <path d={`M${line}`} fill="none" stroke={color} strokeWidth="3.300" strokeLinejoin="round" />;
}

function HistoryChart() {
  const legend = [
    { name: "Confirmed", color: "#f1592a", x: 704.5 },
    { name: "Recovered", color: "#336a24", x: 815.8 },
    { name: "Deaths", color: "#d93a2f", x: 929.8 },
  ];
  return (
    <svg viewBox="500 642 709 360" className="ml-[93.4px] h-[360px] w-[709px] shrink-0" fontSize="12" fill="#666">
      {legend.map((l) => (
        <g key={l.name}>
          <rect x={l.x} y="652" width="40" height="12" fill="rgba(0,0,0,0.1)" stroke={l.color} strokeWidth="3.300" />
          <text x={l.x + 46} y="661">{l.name}</text>
        </g>
      ))}
      {Array.from({ length: 10 }, (_, i) => {
        const y = Math.floor(py(i * 5000)) + 0.5;
        return (
          <g key={i}>
            <path d={`M${L - 10} ${y}H${R}`} stroke={i === 0 ? "rgba(0,0,0,0.25)" : "rgba(0,0,0,0.1)"} />
            <text x="547" y={y + 2.5} textAnchor="end">{i * 5000}</text>
          </g>
        );
      })}
      {tickLabels.map((t, i) => {
        const x = Math.floor(px(i * 4)) + 0.5;
        return (
          <g key={t}>
            <path d={`M${x} ${T}V958`} stroke={i === 0 ? "rgba(0,0,0,0.25)" : "rgba(0,0,0,0.1)"} />
            <text transform={`translate(${x} 959) rotate(-50)`} y="3.500" textAnchor="end">{t}</text>
          </g>
        );
      })}
      <Area data={deaths} />
      <Area data={recovered} />
      <Area data={confirmed} />
      <Line data={deaths} color="#d93a2f" />
      <Line data={recovered} color="#336a24" />
      <Line data={confirmed} color="#f1592a" />
    </svg>
  );
}

const columns = ["Country", "Total Cases", "New Cases", "Total Deaths", "New Deaths", "Total Recovered", "New Recovered", "Active Cases"];
const cellTone = ["", "font-bold text-[#f1592a]", "", "font-bold text-[#d9302b]", "", "font-bold text-[#336a24]", "", ""];
const rows: string[][] = [
  ["Afghanistan", "12456", "625", "227", "7", "1138", "10", "11091"],
  ["Albania", "1050", "21", "33", "0", "812", "9", "205"],
  ["Algeria", "8857", "160", "623", "6", "5129", "211", "3105"],
  ["Andorra", "763", "0", "51", "0", "676", "0", "36"],
  ["Angola", "71", "1", "4", "0", "18", "0", "49"],
  ["Antigua and Barbuda", "25", "0", "3", "0", "19", "0", "3"],
  ["Argentina", "13933", "705", "500", "16", "4349", "182", "9084"],
  ["Armenia", "7774", "372", "98", "7", "3255", "35", "4421"],
  ["Australia", "7150", "11", "103", "0", "6579", "19", "468"],
  ["Austria", "16591", "34", "645", "2", "15228", "46", "718"],
];
const grid = "grid h-[55px] grid-cols-[174px_116.900px_110px_122px_116px_149px_140.900px_1fr] items-center border-b border-[#f0f0f0]";

function PageButton({ children, active }: { children: React.ReactNode; active?: boolean }) {
  return (
    <button
      className={`flex h-8 w-8 items-center justify-center rounded-[2px] border bg-white ${active ? "border-[#ea5768] text-[#ea5768]" : "border-[#d9d9d9]"}`}
    >
      {children}
    </button>
  );
}

export default function App() {
  return (
    <div className="w-[1366px] bg-white pt-px font-['Liberation_Sans',Arial,sans-serif] text-sm text-[#595959]">
      <header className="relative h-[480px] bg-[#fffafa]">
        <div className="flex h-[60px] items-center justify-between px-[50px] pt-px font-bold text-[#ea5768]">
          <div className="flex items-center gap-[2px] text-[22px]">
            <span className="pt-px">C</span>
            <VirusLogo />
            <span className="pt-px pl-px">VID-19</span>
          </div>
          <div className="flex gap-[15px] pt-px text-base">
            <span>Fri May 29 2020</span>
            <span>10:06:09 AM</span>
          </div>
        </div>
        <div className="flex justify-between pr-[115px] pl-[30px]">
          <div className="mt-[115px] flex flex-col gap-[7px]">
            <div className="mb-px flex h-[37px] w-[250px] items-center justify-center gap-[6px] text-xl">
              <GlobeIcon />
              <span className="pb-px">GLOBAL DATA</span>
            </div>
            <StatCard tone="confirmed" total="5,780,056" delta="+103,063" />
            <StatCard tone="recovered" total="2,349,437" delta="+63,132" />
            <StatCard tone="deaths" total="362,488" delta="+5,299" />
          </div>
          <div className="mt-[137px] flex w-[102px] flex-col">
            <Radio label="Confirmed" />
            <Radio label="Deaths" checked />
            <Radio label="Recovered" />
            <Radio label="Active" />
          </div>
        </div>
        <WorldMap />
      </header>

      <main className="mx-auto flex w-[1092.8px] flex-col gap-5 pt-[21px]">
        <section className="flex h-[100px] items-center rounded-lg bg-[#79a27b] px-5">
          <div className="flex-1 pb-[2px] text-lg text-white">Last Update: 29 May 2020 03:54:08 GMT</div>
          <button className="h-10 w-[169px] rounded-full bg-[#ea5768] pt-[2px] text-base font-bold text-white shadow-[0_2px_0_rgba(0,0,0,0.045)] [text-shadow:0_-1px_0_rgba(0,0,0,0.12)]">
            MY COUNTRY
          </button>
          <div className="ml-[10px] flex h-10 w-[280px] items-center justify-between rounded-lg bg-white pr-[11px] pl-[15px] text-base text-[#bfbfbf]">
            <span className="pb-[3px]">Select a Country</span>
            <Chevron className="mt-px" />
          </div>
        </section>

        <section className="flex h-[390.6px] rounded-lg bg-[#ebe7fe] px-5 pt-5">
          <div className="flex flex-col gap-[7px]">
            <h2 className="flex h-[31px] w-[250px] items-center justify-center pb-[2px] text-xl">BANGLADESH</h2>
            <StatCard tone="confirmed" total="38,292" delta="+1,541" />
            <StatCard tone="recovered" total="7,925" delta="+346" />
            <StatCard tone="deaths" total="544" delta="+22" />
          </div>
          <HistoryChart />
        </section>

        <section className="rounded-lg bg-[#ebe7fe] px-5 pt-[30px] pb-5">
          <div className="border-[3px] border-[#ea5768]">
            <div className="flex h-8 items-center justify-between border border-[#d9d9d9] bg-white pr-[10px] pl-[11px] text-[#bfbfbf]">
              <span>Search Country...</span>
              <Chevron className="mt-px" />
            </div>
          </div>
          <div className="mt-[10px] bg-white pb-4">
            <div className={`${grid} bg-[#fafafa] text-[#262626]`}>
              {columns.map((c, i) => (
                <div key={c} className={`pl-4 ${cellTone[i]}`}>{c}</div>
              ))}
            </div>
            {rows.map((r) => (
              <div key={r[0]} className={grid}>
                {r.map((c, i) => (
                  <div key={i} className={`pl-4 ${cellTone[i]}`}>{c}</div>
                ))}
              </div>
            ))}
            <div className="mt-4 flex items-center justify-end gap-2 pr-2">
              <PageButton>
                <Chevron className="rotate-90" />
              </PageButton>
              <PageButton active>1</PageButton>
              <PageButton>2</PageButton>
              <PageButton>3</PageButton>
              <PageButton>4</PageButton>
              <PageButton>5</PageButton>
              <span className="flex w-8 items-center justify-center gap-[3px]">
                <i className="h-1 w-1 rounded-full bg-[#bfbfbf]" />
                <i className="h-1 w-1 rounded-full bg-[#bfbfbf]" />
                <i className="h-1 w-1 rounded-full bg-[#bfbfbf]" />
              </span>
              <PageButton>19</PageButton>
              <PageButton>
                <svg viewBox="0 0 12 12" className="mt-px h-3 w-3" fill="none" stroke="#595959" strokeWidth="1.100">
                  <path d="M2.900 1.400 9.300 6 2.900 10.600" />
                </svg>
              </PageButton>
              <div className="ml-2 flex h-8 w-[100px] items-center justify-between rounded-[2px] border border-[#d9d9d9] pr-[10px] pl-[11px]">
                <span>10 / page</span>
                <Chevron className="mt-px" />
              </div>
            </div>
          </div>
        </section>
      </main>

      <footer className="mt-5 flex h-[66.4px] items-center justify-between bg-white px-[50px] pt-[5px] shadow-[0_-2px_4px_rgba(0,0,0,0.2)]">
        <div className="flex items-center gap-1">
          <span>2020 © Made with</span>
          <svg viewBox="0 0 20 18" className="h-[18px] w-5">
            <path d="M10 17.800C4 13.500.3 10 .3 5.600.3 2.500 2.600.4 5.400.4 7.400.4 9 1.400 10 3 11 1.400 12.600.4 14.600.4c2.800 0 5.100 2.100 5.100 5.200 0 4.400-3.700 7.900-9.700 12.200z" fill="#f0593e" />
            <path d="M10 17.800C4 13.500.3 10 .3 5.600.3 3.500 1.400 1.900 3 1c-1 6 2 12.500 7 16.800z" fill="#e85538" />
          </svg>
          <span className="pl-px">by</span>
          <a className="text-[#ea5768]">fatematzuhora</a>
        </div>
        <div className="flex items-center gap-[5px] text-[#ea5768]">
          <SiGithub className="h-[19px] w-[19px] text-[#5c6bc0]" />
          <span>Proudly Open Source</span>
        </div>
      </footer>
    </div>
  );
}
